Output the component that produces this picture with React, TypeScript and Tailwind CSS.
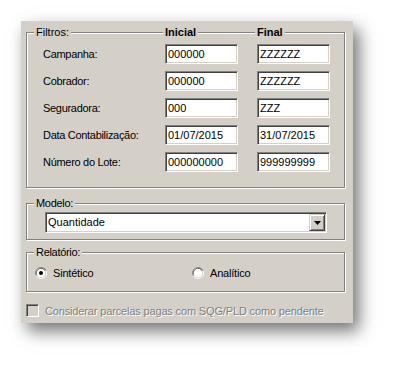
const face = "font-['Liberation_Sans',Arial,sans-serif]";

const sunken =
  "border border-t-[#808080] border-l-[#808080] border-b-white border-r-white shadow-[inset_1px_1px_0_#404040,inset_-1px_-1px_0_#d4d0c8]";

const etched = "border border-[#808080] shadow-[inset_1px_1px_0_#fff,1px_1px_0_#fff]";

const filtros = [
  { label: "Campanha:", ini: "000000", fim: "ZZZZZZ" },
  { label: "Cobrador:", ini: "000000", fim: "ZZZZZZ" },
  { label: "Seguradora:", ini: "000", fim: "ZZZ" },
  { label: "Data Contabilização:", ini: "01/07/2015", fim: "31/07/2015" },
  { label: "Número do Lote:", ini: "000000000", fim: "999999999" },
];

function Caption({ text, className = "" }: { text: string; className?: string }) {
  return (
    <span className={`absolute -top-[7px] bg-[#d4d0c8] px-[2px] leading-[13px] ${className}`}>{text}</span>
  );
}

function TextBox({ value }: { value: string }) {
  return (
    <div className={`h-[20px] w-[73px] bg-white pl-[2px] flex items-center text-[11px] text-black ${sunken}`}>
      {value}
    </div>
  );
}

function Radio({ checked, label }: { checked?: boolean; label: string }) {
  return (
    <div className="flex items-center gap-[6px]">
      <svg width="12" height="12" viewBox="0 0 12 12">
        <path d="M11 3.5A5.5 5.5 0 0 0 1.2 8.5" stroke="#808080" fill="none" />
        <path d="M10 3.5A4.5 4.5 0 0 0 2 7.5" stroke="#404040" fill="none" />
        <circle cx="6" cy="6" r="4.2" fill="#fff" />
        <path d="M1.5 9A5.5 5.5 0 0 0 11.2 4" stroke="#fff" fill="none" />
        {checked && <circle cx="6" cy="6" r="2" fill="#000" />}
      </svg>
      <span className="tracking-[-0.2px]">{label}</span>
    </div>
  );
}

export default function App() {
  return (
    <div className={`min-h-[365px] bg-white pt-[21px] pl-[21px] ${face} text-[11px] text-black`}>
      <div className="w-[332px] h-[302px] bg-[#d4d0c8] pt-[11px] pl-[5px] pr-[8px] shadow-[6px_8px_16px_rgba(0,0,0,0.55)]">
        {/* Filtros */}
        <div className={`relative pt-[11px] pb-[15px] pl-[16px] ${etched}`}>
          <Caption text="Filtros:" className="left-[7px]" />
          <Caption text="Inicial" className="left-[136px] font-bold" />
          <Caption text="Final" className="left-[228px] font-bold" />
          <div className="flex flex-col gap-[7px]">
            {filtros.map((f) => (
              <div key={f.label} className="flex items-center">
                <span className="w-[122px] tracking-[-0.3px]">{f.label}</span>
                <TextBox value={f.ini} />
                <div className="w-[19px]" />
                <TextBox value={f.fim} />
              </div>
            ))}
          </div>
        </div>

        {/* Modelo */}
        <div className={`relative mt-[15px] pt-[8px] pb-[6px] pl-[18px] ${etched}`}>
          <Caption text="Modelo:" className="left-[7px] tracking-[-0.3px]" />
          <div className={`h-[21px] w-[282px] bg-white flex items-center justify-between pl-[2px] pr-[1px] ${sunken}`}>
            <span>Quantidade</span>
            <div className="h-[17px] w-[16px] bg-[#d4d0c8] flex items-center justify-center border border-t-[#d4d0c8] border-l-[#d4d0c8] border-b-[#404040] border-r-[#404040] shadow-[inset_1px_1px_0_#fff,inset_-1px_-1px_0_#808080]">
              <svg width="7" height="4" viewBox="0 0 7 4">
                <path d="M0 0h7L3.5 4z" fill="#000" />
              </svg>
            </div>
          </div>
        </div>

        {/* Relatório */}
        <div className={`relative mt-[12px] pt-[12px] pb-[9px] pl-[8px] ${etched}`}>
          <Caption text="Relatório:" className="left-[7px] tracking-[-0.3px]" />
          <div className="flex items-center">
            <div className="w-[157px]">
              <Radio checked label="Sintético" />
            </div>
            <Radio label="Analítico" />
          </div>
        </div>

        {/* Checkbox desabilitado */}
        <div className="mt-[11px] flex items-center gap-[6px]">
          <div className={`h-[13px] w-[13px] bg-[#d4d0c8] ${sunken}`} />
          <span className="text-[#808080] tracking-[-0.15px] [text-shadow:1px_1px_0_#fff]">
            Considerar parcelas pagas com SQG/PLD como pendente
          </span>
        </div>
      </div>
    </div>
  );
}
